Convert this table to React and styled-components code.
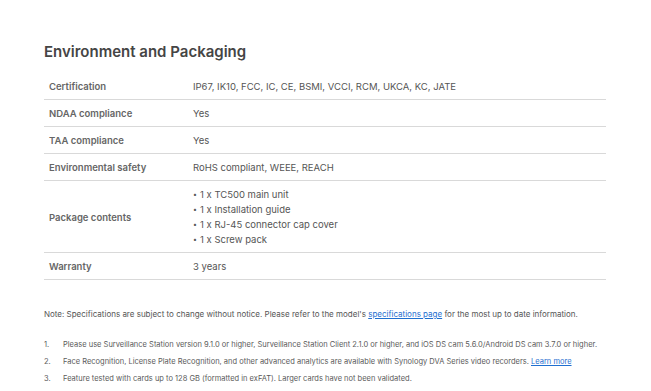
import React from "react";
import styled, { createGlobalStyle } from "styled-components";

const GlobalStyle = createGlobalStyle`
  body {
    margin: 0;
    background: #ffffff;
    font-family: Inter, "Noto Sans", sans-serif;
    color: #555555;
  }
`;

const specs = [
  { label: "Certification", value: "IP67, IK10, FCC, IC, CE, BSMI, VCCI, RCM, UKCA, KC, JATE" },
  { label: "NDAA compliance", value: "Yes" },
  { label: "TAA compliance", value: "Yes" },
  { label: "Environmental safety", value: "RoHS compliant, WEEE, REACH" },
  {
    label: "Package contents",
    list: [
      "1 x TC500 main unit",
      "1 x Installation guide",
      "1 x RJ-45 connector cap cover",
      "1 x Screw pack",
    ],
  },
  { label: "Warranty", value: "3 years" },
];

const App = () => {
  return (
    <Page>
      <GlobalStyle />
      <Title>Environment and Packaging</Title>
      <SpecTable>
        <tbody>
          {specs.map((s) => (
            <Row key={s.label}>
              <Label>{s.label}</Label>
              <Value>
                {s.list ? (
                  <Bullets>
                    {s.list.map((item) => (
                      <li key={item}>{item}</li>
                    ))}
                  </Bullets>
                ) : (
                  s.value
                )}
              </Value>
            </Row>
          ))}
        </tbody>
      </SpecTable>
      <Note>
        Note: Specifications are subject to change without notice. Please refer to the model's{" "}
        <Link href="#">specifications page</Link> for the most up to date information.
      </Note>
      <Footnotes>
        <li>
          <span>
            Please use Surveillance Station version 9.1.0 or higher, Surveillance Station Client 2.1.0 or
            higher, and iOS DS cam 5.6.0/Android DS cam 3.7.0 or higher.
          </span>
        </li>
        <li>
          <span>
            Face Recognition, License Plate Recognition, and other advanced analytics are available with
            Synology DVA Series video recorders. <Link href="#">Learn more</Link>
          </span>
        </li>
        <li>
          <span>Feature tested with cards up to 128 GB (formatted in exFAT). Larger cards have not been validated.</span>
        </li>
      </Footnotes>
    </Page>
  );
};

export default App;

const Page = styled.div`
  padding: 42px 45px 0 44px;
`;

const Title = styled.h2`
  margin: 0 0 11px;
  font-size: 15px;
  line-height: 20px;
  font-weight: 600;
  color: #454545;
`;

const SpecTable = styled.table`
  width: 562px;
  border-collapse: collapse;
`;

const Row = styled.tr`
  border-bottom: 1px solid #d9d9d9;
`;

const Label = styled.td`
  width: 139px;
  padding: 6px 5px 5px;
  font-size: 9.5px;
  line-height: 15px;
  font-weight: 600;
  color: #666666;
  vertical-align: middle;
`;

const Value = styled.td`
  padding: 6px 0 5px;
  font-size: 9.5px;
  line-height: 15px;
  color: #555555;
`;

const Bullets = styled.ul`
  margin: 0;
  padding: 0;
  list-style: none;

  li {
    height: 15px;
  }

  li::before {
    content: "•";
    display: inline-block;
    width: 7px;
    font-size: 7px;
    line-height: 15px;
    vertical-align: top;
  }
`;

const Note = styled.p`
  margin: 29px 0 0;
  font-size: 8px;
  line-height: 10px;
  color: #555555;
`;

const Link = styled.a`
  color: #1f6fd0;
  text-decoration: underline;
`;

const Footnotes = styled.ol`
  margin: 21px 0 0;
  padding: 0;
  list-style: none;
  counter-reset: fn;
  font-size: 7.5px;
  line-height: 10px;
  color: #5a5a5a;

  li {
    counter-increment: fn;
    display: flex;
    margin-bottom: 7px;
  }

  li::before {
    content: counter(fn) ".";
    flex: 0 0 19px;
  }
`;
